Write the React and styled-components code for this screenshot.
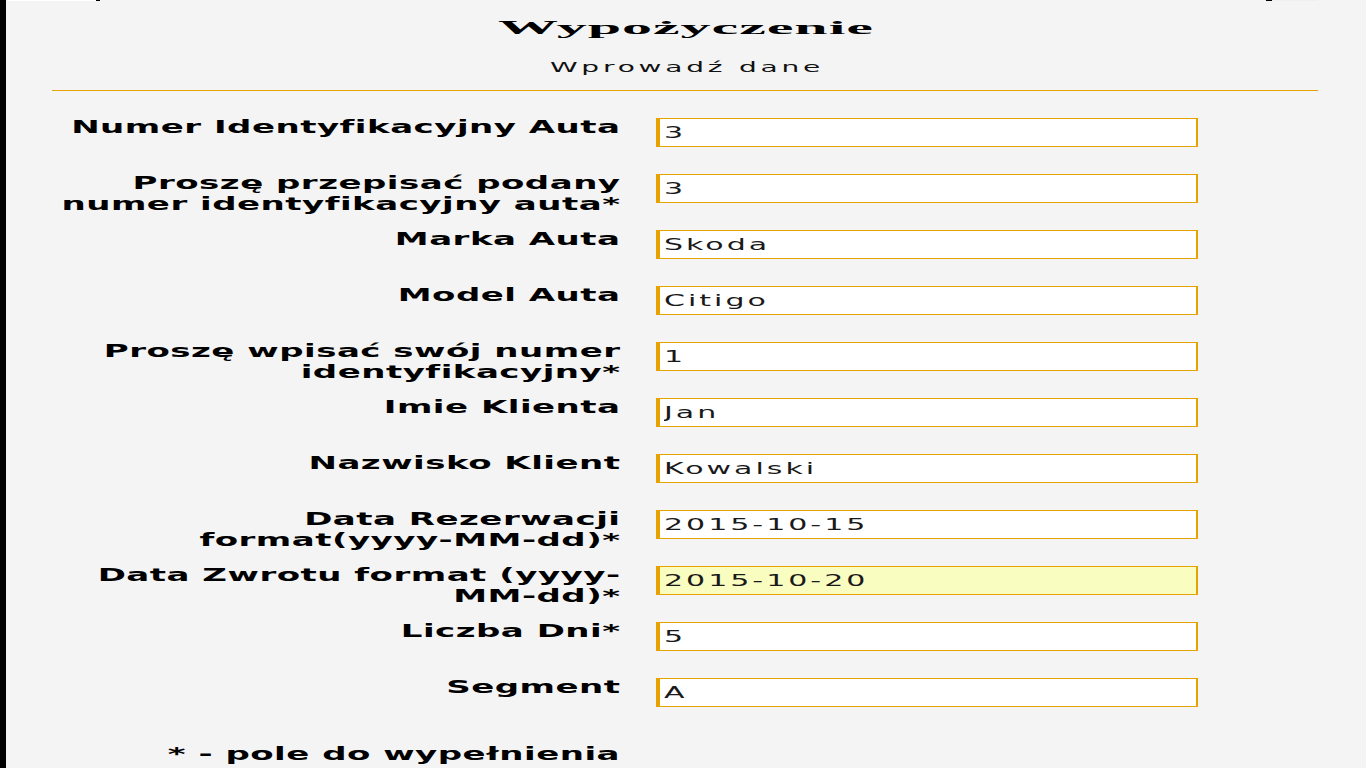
import React from 'react';
import styled, { createGlobalStyle } from 'styled-components';

const fields = [
    { label: ['Numer Identyfikacyjny Auta'], value: '3' },
    { label: ['Proszę przepisać podany', 'numer identyfikacyjny auta*'], value: '3' },
    { label: ['Marka Auta'], value: 'Skoda' },
    { label: ['Model Auta'], value: 'Citigo' },
    { label: ['Proszę wpisać swój numer', 'identyfikacyjny*'], value: '1' },
    { label: ['Imie Klienta'], value: 'Jan' },
    { label: ['Nazwisko Klient'], value: 'Kowalski' },
    { label: ['Data Rezerwacji', 'format(yyyy-MM-dd)*'], value: '2015-10-15' },
    { label: ['Data Zwrotu format (yyyy-', 'MM-dd)*'], value: '2015-10-20', focused: true },
    { label: ['Liczba Dni*'], value: '5' },
    { label: ['Segment'], value: 'A' },
];

// strip left over from the element above the form (1px tall)
const edge = [
    { w: 0.5, c: '#f4f4f4' },
    { w: 44.5, c: '#ffffff' },
    { w: 2, c: '#000000' },
    { w: 583, c: '#f4f4f4' },
    { w: 2.5, c: '#000000' },
    { w: 23, c: '#eeeef3' },
];

const App = () => {
    return (
        <>
            <GlobalStyle />
            <Stage>
                <Page>
                    <TopEdge>
                        {edge.map((s, i) => (
                            <EdgeSeg key={i} $w={s.w} $c={s.c} />
                        ))}
                    </TopEdge>
                    <Title>Wypożyczenie</Title>
                    <Subtitle>Wprowadź dane</Subtitle>
                    <Rule />
                    <Form>
                        {fields.map((f, i) => (
                            <React.Fragment key={i}>
                                <Label>
                                    {f.label.map((line, j) => (
                                        <LabelLine key={j}>{line}</LabelLine>
                                    ))}
                                </Label>
                                <Field
                                    type='text'
                                    defaultValue={f.value}
                                    readOnly
                                    $focused={f.focused}
                                />
                            </React.Fragment>
                        ))}
                        <Note>* - pole do wypełnienia</Note>
                    </Form>
                </Page>
            </Stage>
        </>
    );
};

export default App;

const GlobalStyle = createGlobalStyle`
    html, body {
        margin: 0;
        padding: 0;
        background: #f4f4f4;
        overflow: hidden;
    }
`;

// the page is shown stretched twice as wide
const Stage = styled.div`
    width: 683px;
    height: 768px;
    transform: scaleX(2);
    transform-origin: 0 0;
`;

const Page = styled.div`
    box-sizing: border-box;
    height: 100%;
    overflow: hidden;
    background: #f4f4f4;
    border-left: 3.5px solid #000;
`;

const TopEdge = styled.div`
    display: flex;
    height: 1px;
`;

const EdgeSeg = styled.div`
    flex: none;
    width: ${(p) => p.$w}px;
    background: ${(p) => p.$c};
`;

const Title = styled.h1`
    margin: 16px 0 0;
    font: bold 19px/21px 'Liberation Serif', serif;
    letter-spacing: 0.3px;
    text-align: center;
    color: #000;
    transform: scaleX(1.58);
`;

const Subtitle = styled.p`
    margin: 21px 0 0;
    padding-left: 1px;
    font: 14px/17px 'DejaVu Sans', sans-serif;
    letter-spacing: 1.9px;
    text-align: center;
    color: #111;
`;

const Rule = styled.div`
    height: 1px;
    margin: 14px 24px 0 23px;
    background: #e8a200;
`;

const Form = styled.div`
    display: grid;
    grid-template-columns: 290px 270.5px;
    grid-auto-rows: 56px;
    column-gap: 18px;
    align-items: start;
    margin-top: 26px;
    padding-left: 17px;
`;

const Label = styled.div`
    font: bold 17px/21px 'DejaVu Sans', sans-serif;
    letter-spacing: 0.25px;
    text-align: right;
    color: #000;
`;

const LabelLine = styled.span`
    display: block;
    white-space: nowrap;
    margin-right: -0.25px;
`;

const Field = styled.input`
    box-sizing: border-box;
    width: 100%;
    height: 29px;
    margin: 1px 0 0;
    padding: 0 2px;
    border: 1px solid #e8a200;
    border-left-width: 2px;
    border-right-width: 1.5px;
    border-radius: 0;
    outline: none;
    background: ${(p) => (p.$focused ? '#fafdc0' : '#fff')};
    font: 15px 'DejaVu Sans', sans-serif;
    letter-spacing: 1.5px;
    color: #1a1a1a;
`;

const Note = styled(Label)`
    grid-column: 1;
    padding-top: 11px;
    white-space: nowrap;
`;
